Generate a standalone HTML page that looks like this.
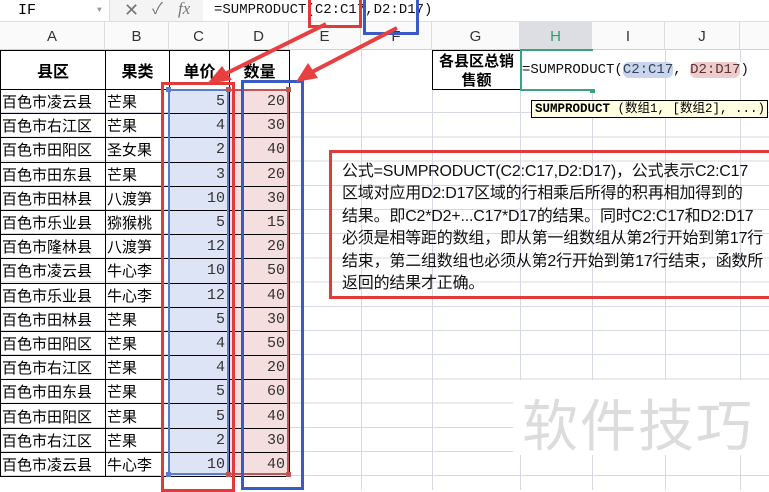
<!DOCTYPE html><html><head><meta charset="utf-8"><style>
*{margin:0;padding:0;box-sizing:border-box}
body{width:769px;height:486px;overflow:hidden;background:#fff;position:relative;font-family:"Liberation Sans","Noto Sans CJK SC",sans-serif}
.a{position:absolute}
.mono{font-family:"Liberation Mono","Noto Sans CJK SC",monospace}
.grid{left:0;top:89px;width:769px;height:400px;background:repeating-linear-gradient(to bottom,transparent 0 23.2px,#d6d8e2 23.2px 24.2px)}
.v{width:1px;background:#d6d8e2;top:50px;height:440px}
.ch{top:22px;height:28px;background:#fafafa;border-bottom:1px solid #d0d0d0;width:769px;left:0}
.chc{top:22px;height:28px;line-height:30px;text-align:center;font-size:15px;color:#333;border-right:1px solid #ddd}
table{position:absolute;left:0;top:50px;border-collapse:collapse}
td{border:1px solid #000;height:24.2px;font-size:15px;padding:0 1px;white-space:nowrap;font-family:"Liberation Sans","Noto Sans CJK SC",sans-serif}
tr.h td{height:39px;font-weight:bold;text-align:center;font-size:16px}
td.n{text-align:right;padding-right:4px;font-family:"Liberation Mono",monospace;color:#333}
td.c{background:#dde4f5}td.d{background:#f5dede}
</style></head><body>
<div class="a grid"></div>
<div class="a v" style="left:361px"></div><div class="a v" style="left:432px"></div><div class="a v" style="left:520px"></div><div class="a v" style="left:592px"></div><div class="a v" style="left:665px"></div><div class="a v" style="left:740px"></div>
<div class="a" style="left:0;top:0;width:769px;height:22px;background:#f4f4f4;border-bottom:1px solid #ddd"></div>
<div class="a mono" style="left:0;top:0;width:110px;height:21px;background:#fff;border-right:1px solid #ddd;font-size:15px;padding-left:18px;line-height:22px">IF<span style="position:absolute;left:97px;top:0;font-size:8px;color:#999">▼</span></div>
<div class="a" style="left:124px;top:0;font-size:18px;color:#777;line-height:20px">✕</div>
<div class="a" style="left:152px;top:0;font-size:16px;color:#777;line-height:20px">✓</div>
<div class="a" style="left:178px;top:-1px;font-size:17px;color:#777;font-style:italic;font-family:'Liberation Serif',serif">fx</div>
<div class="a mono" style="left:203px;top:0;width:566px;height:21px;background:#fff;font-size:14px;line-height:20px;padding-left:11px;color:#111">=SUMPRODUCT(C2:C17,D2:D17)</div>
<div class="a ch"></div>
<div class="a chc" style="left:0;width:105px">A</div><div class="a chc" style="left:105px;width:64px">B</div><div class="a chc" style="left:169px;width:60px">C</div><div class="a chc" style="left:229px;width:60px">D</div><div class="a chc" style="left:289px;width:72px">E</div><div class="a chc" style="left:361px;width:71px">F</div><div class="a chc" style="left:432px;width:88px">G</div><div class="a chc" style="left:520px;width:72px;background:#dcdee3;color:#2e9e6e">H</div><div class="a chc" style="left:592px;width:73px">I</div><div class="a chc" style="left:665px;width:75px">J</div>
<table>
<colgroup><col style="width:105px"><col style="width:64px"><col style="width:60px"><col style="width:60px"></colgroup>
<tr class="h"><td>县区</td><td>果类</td><td>单价</td><td>数量</td></tr>
<tr><td>百色市凌云县</td><td>芒果</td><td class="n c">5</td><td class="n d">20</td></tr>
<tr><td>百色市右江区</td><td>芒果</td><td class="n c">4</td><td class="n d">30</td></tr>
<tr><td>百色市田阳区</td><td>圣女果</td><td class="n c">2</td><td class="n d">40</td></tr>
<tr><td>百色市田东县</td><td>芒果</td><td class="n c">3</td><td class="n d">20</td></tr>
<tr><td>百色市田林县</td><td>八渡笋</td><td class="n c">10</td><td class="n d">30</td></tr>
<tr><td>百色市乐业县</td><td>猕猴桃</td><td class="n c">5</td><td class="n d">15</td></tr>
<tr><td>百色市隆林县</td><td>八渡笋</td><td class="n c">12</td><td class="n d">20</td></tr>
<tr><td>百色市凌云县</td><td>牛心李</td><td class="n c">10</td><td class="n d">50</td></tr>
<tr><td>百色市乐业县</td><td>牛心李</td><td class="n c">12</td><td class="n d">40</td></tr>
<tr><td>百色市田林县</td><td>芒果</td><td class="n c">5</td><td class="n d">30</td></tr>
<tr><td>百色市田阳区</td><td>芒果</td><td class="n c">4</td><td class="n d">50</td></tr>
<tr><td>百色市右江区</td><td>芒果</td><td class="n c">4</td><td class="n d">20</td></tr>
<tr><td>百色市田东县</td><td>芒果</td><td class="n c">5</td><td class="n d">60</td></tr>
<tr><td>百色市田阳区</td><td>芒果</td><td class="n c">5</td><td class="n d">40</td></tr>
<tr><td>百色市右江区</td><td>芒果</td><td class="n c">2</td><td class="n d">30</td></tr>
<tr><td>百色市凌云县</td><td>牛心李</td><td class="n c">10</td><td class="n d">40</td></tr>
</table>
<div class="a" style="left:168px;top:89px;width:61px;height:386px;border:2px solid #5b7cc8"></div>
<div class="a" style="left:166px;top:87px;width:5px;height:5px;background:#5b7cc8"></div>
<div class="a" style="left:166px;top:472px;width:5px;height:5px;background:#5b7cc8"></div>
<div class="a" style="left:226px;top:87px;width:5px;height:5px;background:#c05555"></div>
<div class="a" style="left:226px;top:472px;width:5px;height:5px;background:#c05555"></div>
<div class="a" style="left:229px;top:89px;width:60px;height:386px;border:2px solid #c05555;border-left:none"></div>
<div class="a" style="left:286px;top:87px;width:5px;height:5px;background:#c05555"></div>
<div class="a" style="left:286px;top:472px;width:5px;height:5px;background:#c05555"></div>
<div class="a" style="left:432px;top:50px;width:89px;height:40px;border:1px solid #000;background:#fff;font-weight:bold;font-size:15px;text-align:center;line-height:19px;padding-top:1px">各县区总销<br>售额</div>
<div class="a" style="left:520px;top:49px;width:73px;height:42px;border:2px solid #3aa37a;border-right:none;background:#fff"></div>
<div class="a" style="left:590px;top:89px;width:5px;height:4px;background:#3aa37a"></div>
<div class="a mono" style="left:522px;top:62px;font-size:14px;white-space:nowrap;background:#fff;color:#111">=SUMPRODUCT(<span style="background:#c9d5ee;border-radius:6px;color:#345">C2:C17</span>, <span style="background:#efcccc;border-radius:6px;color:#533">D2:D17</span>)</div>
<div class="a mono" style="left:531px;top:100px;width:237px;height:18px;background:#ffffe1;border:1px solid #000;font-size:12.5px;line-height:16px;padding-left:3px;white-space:nowrap"><b>SUMPRODUCT</b> (数组1, [数组2], ...)</div>
<div class="a" style="left:329px;top:150px;width:445px;height:149px;border:3px solid #e03a3a;padding:8px 0 0 10px;font-size:16px;line-height:22.4px;color:#111;white-space:nowrap;letter-spacing:-0.2px">公式=SUMPRODUCT(C2:C17,D2:D17)，公式表示C2:C17<br>区域对应用D2:D17区域的行相乘后所得的积再相加得到的<br>结果。即C2*D2+...C17*D17的结果。同时C2:C17和D2:D17<br>必须是相等距的数组，即从第一组数组从第2行开始到第17行<br>结束，第二组数组也必须从第2行开始到第17行结束，函数所<br>返回的结果才正确。</div>
<div class="a" style="left:513px;top:380px;width:256px;height:75px;background:#fff"></div>
<div class="a" style="left:522px;top:382px;font-size:56px;color:#dcdcdc;letter-spacing:2px;font-family:'Noto Sans CJK SC',sans-serif">软件技巧</div>
<div class="a" style="left:308px;top:-3px;width:54px;height:31px;border:3px solid #e03a3a"></div>
<div class="a" style="left:363px;top:-3px;width:56px;height:38px;border:3px solid #3a5ac8"></div>
<div class="a" style="left:161px;top:82px;width:74px;height:410px;border:3px solid #e03a3a"></div>
<div class="a" style="left:241px;top:80px;width:63px;height:410px;border:3px solid #3a5ac8"></div>
<svg class="a" style="left:0;top:0" width="769" height="486">
<line x1="326" y1="24" x2="225" y2="74" stroke="#e84040" stroke-width="4"/>
<polygon points="207,84 222,66 232,80" fill="#e84040"/>
<line x1="397" y1="28" x2="312" y2="72" stroke="#e84040" stroke-width="4"/>
<polygon points="296,82 308,63 318,78" fill="#e84040"/>
</svg>
</body></html>
